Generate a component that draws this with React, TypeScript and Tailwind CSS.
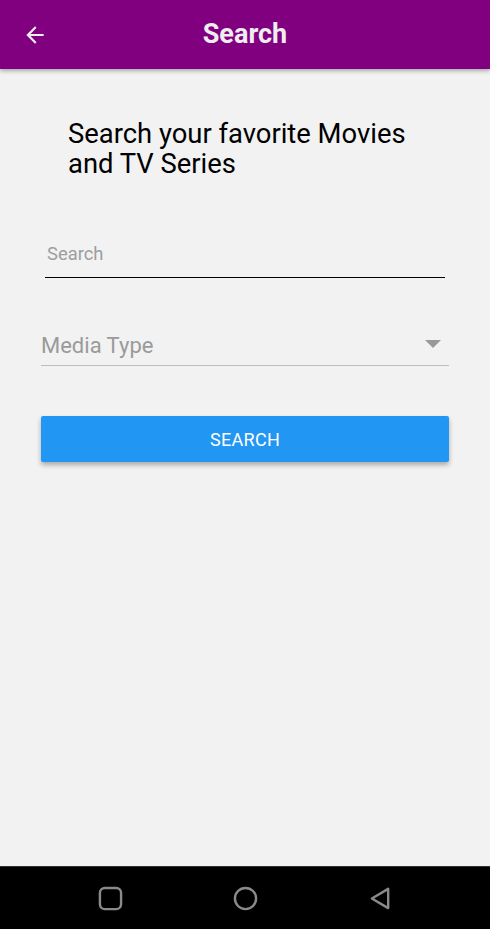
import React from "react";

const App = () => {
  return (
    <div className="flex h-[929px] w-full flex-col bg-[#f2f2f2] font-['Roboto',sans-serif]">
      {/* Header */}
      <header className="relative z-10 flex h-[69px] shrink-0 items-center bg-[#800080] shadow-[0_2px_4px_rgba(0,0,0,0.3)]">
        <button className="ml-[22px] flex h-[26px] w-[26px] items-center justify-center text-[#eeeeee]">
          <svg width="26" height="26" viewBox="0 0 24 24" fill="currentColor">
            <path d="M20 11H7.83l5.59-5.59L12 4l-8 8 8 8 1.41-1.41L7.83 13H20v-2z" />
          </svg>
        </button>
        <h1 className="absolute left-0 right-0 mx-auto w-fit text-[27px] font-bold text-[#eeeeee]">
          Search
        </h1>
      </header>

      {/* Content */}
      <main className="flex flex-1 flex-col px-[41px]">
        <h2 className="mt-[50px] pl-[27px] text-[27.4px] leading-[30px] text-black">
          Search your favorite Movies
          <br />
          and TV Series
        </h2>

        <div className="mx-[4px] mt-[62px] border-b-[1.5px] border-black pt-[2px] pb-[10px] pl-[2px]">
          <input
            placeholder="Search"
            className="w-full bg-transparent text-[18.4px] leading-[22px] outline-none placeholder:text-[#9e9e9e]"
          />
        </div>

        <div className="mt-[52px] flex items-center justify-between border-b border-[#bdbdbd] pt-[2px] pb-[5px]">
          <span className="text-[22px] leading-[28px] text-[#9a9a9a]">Media Type</span>
          <svg width="16" height="8" viewBox="0 0 16 8" className="mr-[8px] mb-[4px]">
            <path d="M0 0h16L8 8z" fill="#999999" />
          </svg>
        </div>

        <button className="mt-[50px] h-[46px] w-full rounded-[2px] bg-[#2196f3] text-[18px] tracking-[0.3px] text-white shadow-[0_3px_5px_rgba(0,0,0,0.3)]">
          SEARCH
        </button>
      </main>

      {/* Android nav bar */}
      <nav className="flex h-[63px] shrink-0 items-center justify-center gap-[110px] border-t border-[#333] bg-black">
        <svg width="25" height="25" viewBox="0 0 26 26">
          <rect x="2" y="2" width="22" height="22" rx="5" fill="none" stroke="#8a8a8a" strokeWidth="2.5" />
        </svg>
        <svg width="25" height="25" viewBox="0 0 26 26">
          <circle cx="13" cy="13" r="11" fill="none" stroke="#8a8a8a" strokeWidth="2.5" />
        </svg>
        <svg width="25" height="25" viewBox="0 0 26 26">
          <path d="M21 3v20L4 13z" fill="none" stroke="#8a8a8a" strokeWidth="2.5" strokeLinejoin="round" />
        </svg>
      </nav>
    </div>
  );
};

export default App;
